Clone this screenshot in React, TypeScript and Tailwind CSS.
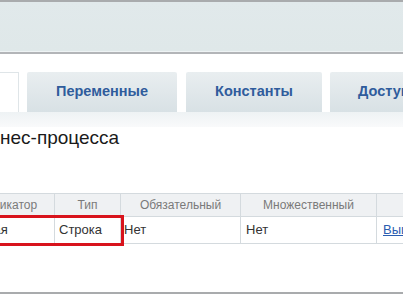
import React from "react";

const tabs = [
  { label: "Переменные", w: "w-[150px]" },
  { label: "Константы", w: "w-[136px]" },
];

export default function App() {
  return (
    <div
      className="flex h-[294px] w-[403px] flex-col overflow-hidden bg-white"
      style={{ fontFamily: '"Liberation Sans", Arial, sans-serif' }}
    >
      {/* шапка */}
      <div className="h-[2px] bg-[#a9abad]" />
      <div className="h-[50px] bg-gradient-to-b from-[#e1e9eb] to-[#dfe8e9] border-b border-[#eef3f4]" />
      <div className="h-[2px] bg-[#b3b5b8]" />

      {/* вкладки */}
      <div className="mt-[18px] flex h-[40px] items-stretch">
        <div className="w-[19px] shrink-0 border-r border-t border-[#dfe5e8] bg-white" />
        <div className="ml-[8px] flex gap-[9px]">
          {tabs.map((t) => (
            <div
              key={t.label}
              className={`${t.w} shrink-0 rounded-t-[2px] bg-gradient-to-b from-[#e9eef0] to-[#d8e1e5] flex items-center justify-center text-[14.5px] font-bold text-[#2f5c9c]`}
            >
              {t.label}
            </div>
          ))}
          <div className="ml-[-1px] shrink-0 rounded-t-[2px] bg-gradient-to-b from-[#e9eef0] to-[#d8e1e5] flex items-center pl-[28px] pr-[28px] text-[14.5px] font-bold text-[#2f5c9c]">
            Доступ
          </div>
        </div>
      </div>
      <div className="h-[15px] bg-gradient-to-b from-[#eef2f4] to-[#f9fafb]" />

      <h2 className="h-[22px] text-[19px] leading-[22px] text-[#1a1a1a] whitespace-nowrap">
        нес-процесса
      </h2>

      {/* таблица */}
      <div className="relative mt-[44px]">
        <table className="ml-[-69px] w-[525px] table-fixed border-collapse text-[13px] whitespace-nowrap">
          <colgroup>
            <col className="w-[123px]" />
            <col className="w-[66px]" />
            <col className="w-[120px]" />
            <col className="w-[136px]" />
            <col className="w-[80px]" />
          </colgroup>
          <thead>
            <tr className="h-[23px] bg-[#eff1f3] text-[12px] text-[#7a7a7a]">
              <th className="border border-[#d4dade] font-normal">Идентификатор</th>
              <th className="border border-[#d4dade] font-normal">Тип</th>
              <th className="border border-[#d4dade] font-normal">Обязательный</th>
              <th className="border border-[#d4dade] font-normal">Множественный</th>
              <th className="border border-[#d4dade] font-normal" />
            </tr>
          </thead>
          <tbody>
            <tr className="h-[27px] text-[#333]">
              <td className="border border-[#d4dade] pl-0">Переменная</td>
              <td className="border border-[#d4dade] pl-[4px]">Строка</td>
              <td className="border border-[#d4dade] pl-[3px]">Нет</td>
              <td className="border border-[#d4dade] pl-[5px]">Нет</td>
              <td className="border border-[#d4dade] pl-[6px]">
                <a href="#" className="text-[#2a5db0] underline">
                  Выше
                </a>
              </td>
            </tr>
          </tbody>
        </table>
        {/* красная рамка-выделение */}
        <div className="pointer-events-none absolute left-[-10px] top-[22px] h-[31px] w-[134px] border-[3px] border-[#d8131c]" />
      </div>

      <div className="flex-1" />
      <div className="h-[2px] bg-[#a9abad]" />
    </div>
  );
}
